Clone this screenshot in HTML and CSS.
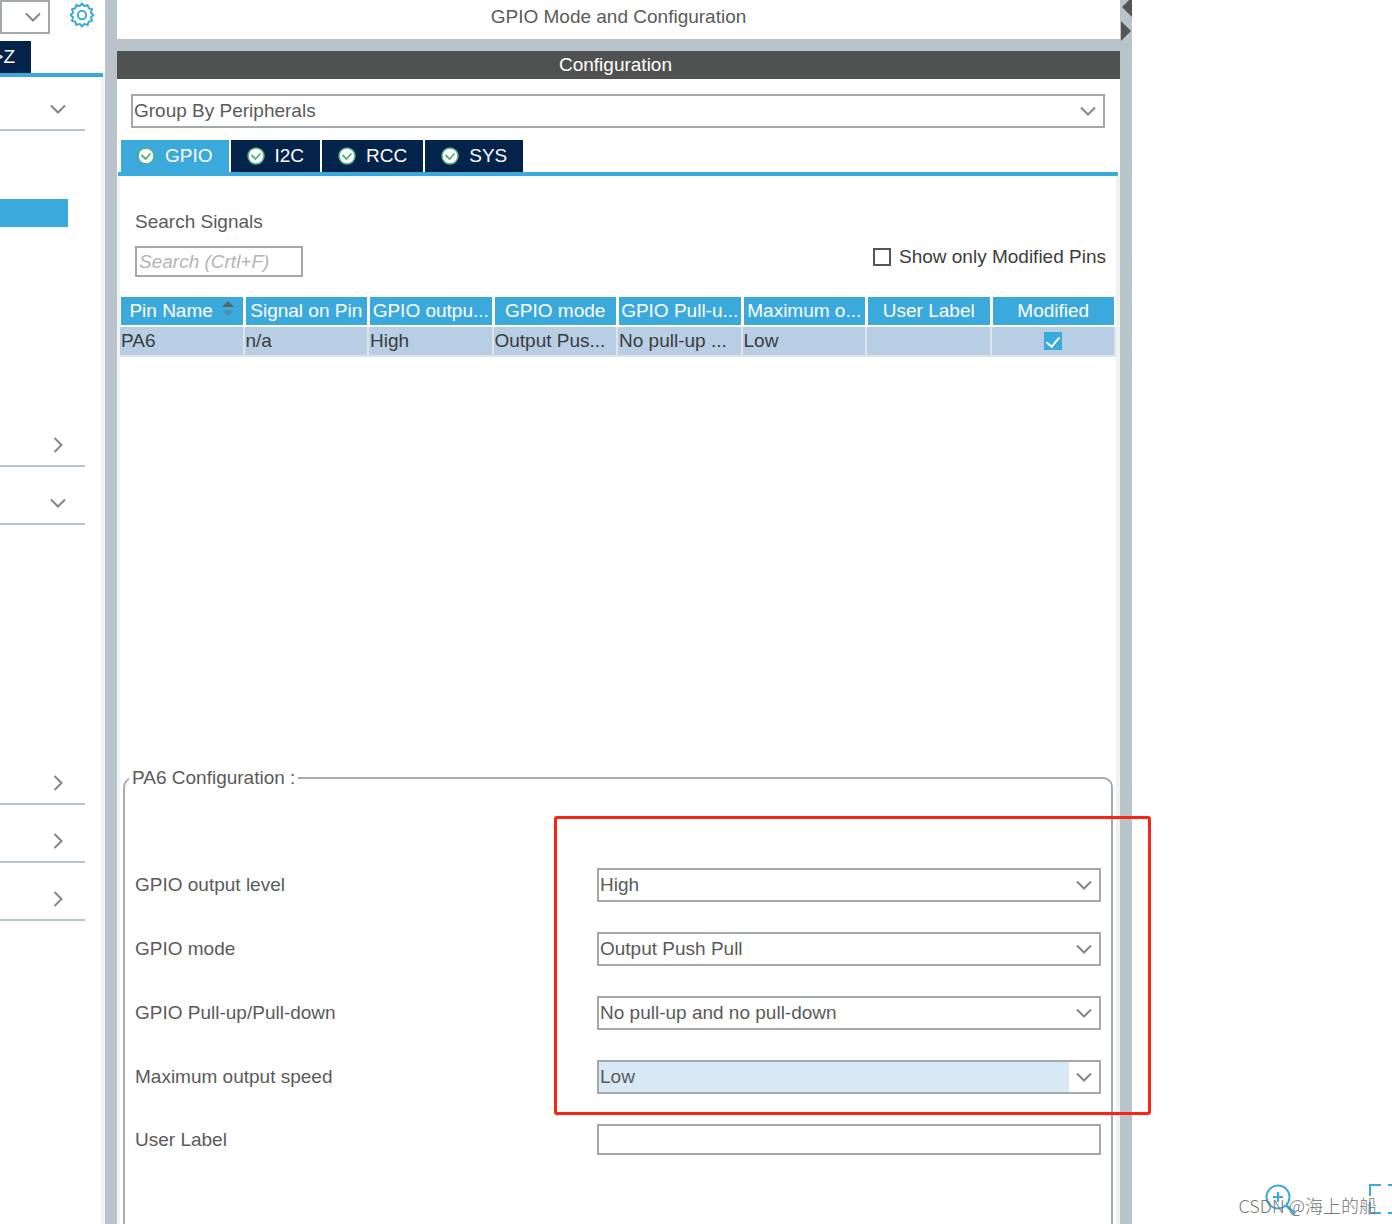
FILE: index.html
```html
<!DOCTYPE html>
<html lang="en">
<head>
    <meta charset="UTF-8">
    <meta name="viewport" content="width=device-width, initial-scale=1.0">
    <title>GPIO Mode and Configuration</title>
    <link rel="stylesheet" href="styles.css">
</head>
<body>
    <svg class="defs" width="0" height="0" aria-hidden="true">
        <symbol id="down" viewBox="0 0 18 18"><path d="M2 5.500L9 12.500L16 5.500"/></symbol>
        <symbol id="right" viewBox="0 0 18 18"><path d="M5.500 2L12.500 9L5.500 16"/></symbol>
        <symbol id="ok" viewBox="0 0 18 18">
            <circle cx="9" cy="9" r="8" fill="#fff" stroke="#4fae7b" stroke-width="1.500"/>
            <path d="M4.500 8L8.500 12L13.500 6.500" fill="none" stroke="#4fae7b" stroke-width="1.800"/>
        </symbol>
    </svg>

    <aside class="sidebar">
        <div class="sidebar-top">
            <div class="select-box sidebar-search">
                <select aria-label="Search component"><option></option></select>
                <span class="arrow"><svg class="chevron"><use href="#down"/></svg></span>
            </div>
            <button class="gear" aria-label="Settings">
                <svg width="26" height="26" viewBox="0 0 26 26" fill="none" stroke="#3ba9dc" stroke-width="2">
                    <circle cx="13" cy="13" r="4.200"/>
                    <path d="M13 1.500l2.200 2.600 3.500-1.100 1 3.300 3.300 1-1.100 3.500 2.600 2.200-2.600 2.200 1.100 3.500-3.300 1-1 3.300-3.500-1.100-2.200 2.600-2.200-2.600-3.500 1.100-1-3.300-3.300-1 1.100-3.500-2.600-2.200 2.600-2.200-1.100-3.500 3.300-1 1-3.300 3.500 1.100z" stroke-linejoin="round"/>
                </svg>
            </button>
        </div>
        <div class="sidebar-tabs">
            <button class="sort-tab">&gt;Z</button>
        </div>
        <div class="categories">
            <button class="category" aria-label="Collapse"><svg class="chevron"><use href="#down"/></svg></button>
            <div class="category-body first">
                <button class="selected" aria-label="GPIO"></button>
            </div>
            <button class="category" aria-label="Expand"><svg class="chevron"><use href="#right"/></svg></button>
            <button class="category" aria-label="Collapse"><svg class="chevron"><use href="#down"/></svg></button>
            <div class="category-body second"></div>
            <button class="category" aria-label="Expand"><svg class="chevron"><use href="#right"/></svg></button>
            <button class="category" aria-label="Expand"><svg class="chevron"><use href="#right"/></svg></button>
            <button class="category" aria-label="Expand"><svg class="chevron"><use href="#right"/></svg></button>
        </div>
    </aside>

    <div class="splitter"></div>

    <main class="main">
        <h1 class="title">GPIO Mode and Configuration</h1>
        <h2 class="subtitle">Configuration</h2>

        <div class="group-by">
            <div class="select-box">
                <select aria-label="Group by"><option>Group By Peripherals</option></select>
                <span class="arrow"><svg class="chevron"><use href="#down"/></svg></span>
            </div>
        </div>

        <nav class="tabs">
            <button class="tab active"><svg class="ok"><use href="#ok"/></svg>GPIO</button>
            <button class="tab"><svg class="ok"><use href="#ok"/></svg>I2C</button>
            <button class="tab"><svg class="ok"><use href="#ok"/></svg>RCC</button>
            <button class="tab"><svg class="ok"><use href="#ok"/></svg>SYS</button>
        </nav>

        <section class="panel">
            <div class="filters">
                <div class="search">
                    <label for="search">Search Signals</label>
                    <input type="text" id="search" placeholder="Search (Crtl+F)">
                </div>
                <label class="modified-only"><input type="checkbox">Show only Modified Pins</label>
            </div>

            <div class="pins">
                <table>
                    <thead>
                        <tr>
                            <th>Pin Name
                                <svg class="sort" width="12" height="16" viewBox="0 0 12 16"><path d="M0 6L6 0L12 6z" fill="#5c6468"/><path d="M0 9L6 15L12 9z" fill="#4c90b2"/></svg>
                            </th>
                            <th>Signal on Pin</th>
                            <th>GPIO outpu...</th>
                            <th>GPIO mode</th>
                            <th>GPIO Pull-u...</th>
                            <th>Maximum o...</th>
                            <th>User Label</th>
                            <th>Modified</th>
                        </tr>
                    </thead>
                    <tbody>
                        <tr>
                            <td>PA6</td>
                            <td>n/a</td>
                            <td>High</td>
                            <td>Output Pus...</td>
                            <td>No pull-up ...</td>
                            <td>Low</td>
                            <td></td>
                            <td><input type="checkbox" aria-label="Modified" checked></td>
                        </tr>
                    </tbody>
                </table>
            </div>

            <fieldset class="config">
                <legend>PA6 Configuration :</legend>
                <div class="form">
                    <label for="level">GPIO output level</label>
                    <div class="select-box">
                        <select id="level"><option>High</option></select>
                        <span class="arrow"><svg class="chevron"><use href="#down"/></svg></span>
                    </div>
                    <label for="mode">GPIO mode</label>
                    <div class="select-box">
                        <select id="mode"><option>Output Push Pull</option></select>
                        <span class="arrow"><svg class="chevron"><use href="#down"/></svg></span>
                    </div>
                    <label for="pull">GPIO Pull-up/Pull-down</label>
                    <div class="select-box">
                        <select id="pull"><option>No pull-up and no pull-down</option></select>
                        <span class="arrow"><svg class="chevron"><use href="#down"/></svg></span>
                    </div>
                    <label for="speed">Maximum output speed</label>
                    <div class="select-box focused">
                        <select id="speed"><option>Low</option></select>
                        <span class="arrow"><svg class="chevron"><use href="#down"/></svg></span>
                    </div>
                    <label for="user-label">User Label</label>
                    <input type="text" id="user-label">
                    <div class="marker"></div>
                </div>
            </fieldset>
        </section>
    </main>

    <div class="splitter">
        <svg width="12" height="42" viewBox="0 0 12 42" fill="#555"><path d="M12 -3v20L2 7z"/><path d="M1 21v20l10-10z"/></svg>
    </div>

    <section class="canvas">
        <button class="zoom-in" aria-label="Zoom in">
            <svg width="32" height="32" viewBox="0 0 32 32" fill="none" stroke="#3ba9dc" stroke-width="2"><circle cx="14" cy="13" r="11.500"/><path d="M14 8v10M9 13h10" /><path d="M22 21l9 9" stroke-width="3"/></svg>
        </button>
        <button class="fit" aria-label="Best fit">
            <svg width="23" height="30" viewBox="0 0 23 30" fill="none" stroke="#3ba9dc" stroke-width="2"><path d="M1 12V1h11M1 18v11h11M19 1h4M19 29h4"/></svg>
        </button>
        <span class="watermark">CSDN @海上的船</span>
    </section>
</body>
</html>
```

FILE: styles.css
```css
* {
    box-sizing: border-box;
}
body {
    margin: 0;
    display: flex;
    height: 100vh;
    overflow: hidden;
    background: #fff;
    color: #5a5a5a;
    font-family: "Liberation Sans", Arial, sans-serif;
    font-size: 19px;
    line-height: 24px;
}
button, input, select {
    font: inherit;
    color: inherit;
    margin: 0;
    padding: 0;
    border: none;
    border-radius: 0;
    background: none;
}
button {
    cursor: pointer;
}
.defs {
    position: absolute;
}
.chevron {
    width: 18px;
    height: 18px;
    fill: none;
    stroke: #858585;
    stroke-width: 2;
}

/* sidebar */
.sidebar {
    flex: 0 0 105px;
    display: flex;
    flex-direction: column;
}
.sidebar-top {
    display: flex;
    justify-content: space-between;
    height: 41px;
    padding-right: 10px;
}
.sidebar-search {
    width: 50px;
}
.sidebar-search select {
    border-top: none;
    border-left: none;
}
.gear {
    height: 28px;
    display: flex;
    align-items: flex-end;
}
.sidebar-tabs {
    display: flex;
    height: 36px;
    margin-right: 2px;
    border-bottom: 4px solid #3ba9dc;
}
.sort-tab {
    width: 31px;
    padding-right: 16px;
    display: flex;
    justify-content: flex-end;
    align-items: center;
    background: #03234b;
    color: #fff;
    white-space: nowrap;
}
.categories {
    flex: 1;
    display: flex;
    flex-direction: column;
    gap: 16px;
    padding: 12px 16px 0 0;
    border-right: 4px solid #f2f2f2;
}
.category {
    flex: none;
    display: flex;
    justify-content: flex-end;
    align-items: center;
    height: 42px;
    padding-right: 18px;
    border-bottom: 2px solid #b9c4ca;
}
.category-body {
    flex: none;
}
.category-body.first {
    height: 262px;
    padding-top: 52px;
}
.category-body.second {
    height: 206px;
}
.selected {
    display: block;
    width: 68px;
    height: 28px;
    background: #3ba9dc;
}

.splitter {
    flex: 0 0 12px;
    background: #b9c4ca;
}
.splitter svg {
    display: block;
}

/* main column */
.main {
    flex: 1;
    min-width: 0;
    display: flex;
    flex-direction: column;
}
.title, .subtitle {
    margin: 0;
    font-size: 19px;
    font-weight: normal;
    text-align: center;
}
.title {
    height: 51px;
    padding-top: 5px;
    border-bottom: 12px solid #b9c4ca;
}
.subtitle {
    height: 28px;
    padding-right: 6px;
    line-height: 28px;
    background: #505251;
    color: #fff;
}
.group-by {
    padding: 15px 15px 12px 14px;
}
.select-box {
    position: relative;
    height: 34px;
}
.select-box select {
    appearance: none;
    display: block;
    width: 100%;
    height: 100%;
    padding: 0 32px 0 1px;
    border: 2px solid #a3a8ac;
}
.select-box .arrow {
    position: absolute;
    top: 2px;
    right: 2px;
    bottom: 2px;
    width: 30px;
    display: flex;
    align-items: center;
    justify-content: center;
    background: #fff;
    pointer-events: none;
}
.focused select {
    background: #d9e8f5;
}
.tabs {
    display: flex;
    gap: 2px;
    height: 36px;
    margin: 0 2px 0 1px;
    padding: 0 3px;
    border-bottom: 4px solid #3ba9dc;
}
.tab {
    display: flex;
    align-items: center;
    gap: 10px;
    padding: 0 16px;
    background: #03234b;
    color: #fff;
}
.tab.active {
    background: #3ba9dc;
}
.ok {
    width: 18px;
    height: 18px;
}

.panel {
    flex: 1;
    display: flex;
    flex-direction: column;
    border: solid #f0f2f4;
    border-width: 0 4px 0 3px;
}
.filters {
    display: flex;
    justify-content: space-between;
    align-items: flex-end;
    padding: 34px 10px 20px 15px;
}
.search {
    display: flex;
    flex-direction: column;
    gap: 12px;
}
input[type="text"] {
    height: 31px;
    padding: 0 2px;
    border: 2px solid #a3a8ac;
}
#search {
    width: 168px;
}
#search::placeholder {
    color: #b4b4b4;
    font-style: italic;
    opacity: 1;
}
.modified-only {
    display: flex;
    align-items: center;
    gap: 8px;
    padding-bottom: 8px;
    color: #3c3c3c;
}
input[type="checkbox"] {
    appearance: none;
    width: 18px;
    height: 18px;
    border: 2px solid #555;
}
input[type="checkbox"]:checked {
    display: block;
    margin: 0 auto;
    padding-top: 2px;
    border: none;
    background: #3ba9dc;
}
input[type="checkbox"]:checked::before {
    content: "";
    display: block;
    width: 6px;
    height: 11px;
    margin: 0 auto;
    border: solid #fff;
    border-width: 0 2px 2px 0;
    transform: rotate(40deg);
}

/* pin table */
.pins {
    height: 469px;
}
table {
    width: 100%;
    table-layout: fixed;
    border-spacing: 0;
}
th, td {
    height: 30px;
    padding: 0;
    overflow: hidden;
    white-space: nowrap;
}
th {
    border: solid #fff;
    border-width: 0 2px 2px 1px;
    background: #3ba9dc;
    color: #fff;
    font-weight: normal;
}
td {
    border-right: 2px solid #dde4ea;
    border-bottom: 2px solid #dde4ea;
    padding-left: 1px;
    background: #b8cee5;
    color: #3c3c3c;
}
.sort {
    margin-left: 4px;
}

/* pin settings */
.config {
    flex: 1;
    min-width: 0;
    margin: 0 3px;
    padding: 78px 10px 0;
    border: 2px solid #a5abb0;
    border-bottom: none;
    border-radius: 10px 10px 0 0;
}
.config legend {
    margin-left: -6px;
    padding: 0 3px;
}
.form {
    position: relative;
    display: grid;
    grid-template-columns: 462px 1fr;
    align-items: center;
    gap: 30px 0;
}
/* frame round the four drop-downs */
.marker {
    position: absolute;
    grid-area: 1 / 2 / 5 / 3;
    inset: -52px -50px -21px -43px;
    border: 3px solid #fa2314;
    border-radius: 3px;
    pointer-events: none;
}

/* pinout view */
.canvas {
    flex: 0 0 260px;
    position: relative;
}
.canvas svg {
    display: block;
}
.zoom-in {
    position: absolute;
    right: 96px;
    bottom: 8px;
}
.fit {
    position: absolute;
    right: 0;
    bottom: 10px;
}
.watermark {
    position: absolute;
    right: 15px;
    bottom: 7px;
    color: #777;
    font-family: "Noto Sans CJK SC", sans-serif;
    font-size: 18px;
    font-weight: 300;
    white-space: nowrap;
}
```
